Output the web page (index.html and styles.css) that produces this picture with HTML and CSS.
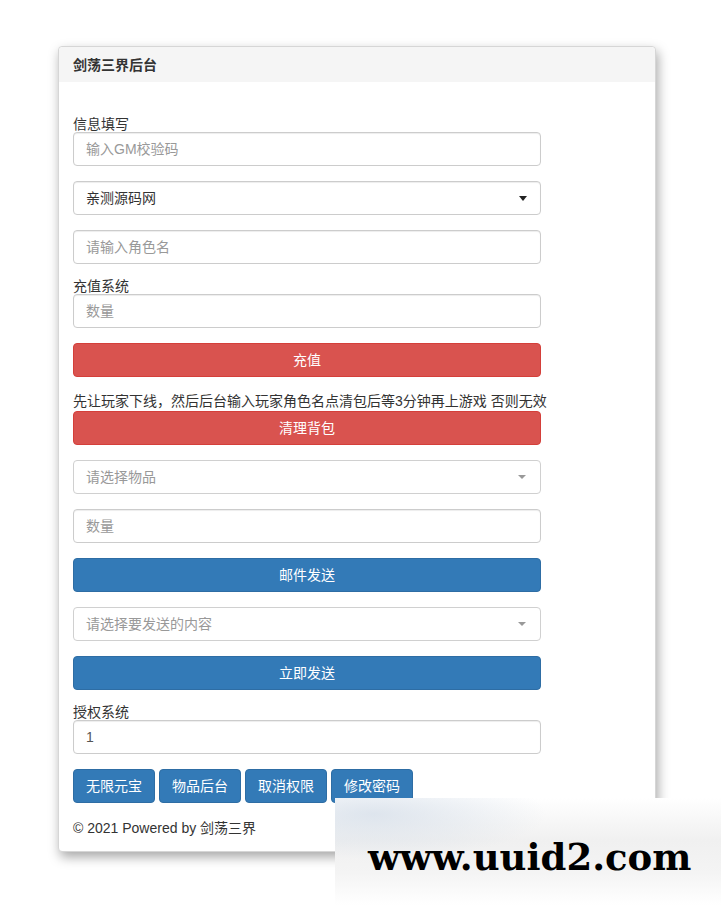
FILE: index.html
```html
<!DOCTYPE html>
<html lang="zh-CN">
<head>
    <meta charset="UTF-8">
    <meta name="viewport" content="width=device-width, initial-scale=1.0">
    <title>剑荡三界后台</title>
    <link rel="stylesheet" href="styles.css">
</head>
<body>
    <div class="panel">
        <div class="panel-heading">剑荡三界后台</div>

        <div class="panel-body">
            <form class="gm-form">
                <!-- 信息填写 -->
                <label class="field-label">信息填写</label>
                <div class="form-group">
                    <input type="text" class="form-control" placeholder="输入GM校验码">
                </div>
                <div class="form-group">
                    <div class="form-control select">
                        <span>亲测源码网</span>
                        <span class="caret"></span>
                    </div>
                </div>
                <div class="form-group">
                    <input type="text" class="form-control" placeholder="请输入角色名">
                </div>

                <!-- 充值系统 -->
                <label class="field-label">充值系统</label>
                <div class="form-group">
                    <input type="text" class="form-control" placeholder="数量">
                </div>
                <div class="form-group">
                    <div class="btn btn-danger btn-block">充值</div>
                </div>
                <p class="notice">先让玩家下线，然后后台输入玩家角色名点清包后等3分钟再上游戏 否则无效</p>
                <div class="form-group">
                    <div class="btn btn-danger btn-block">清理背包</div>
                </div>

                <!-- 邮件 -->
                <div class="form-group">
                    <div class="form-control select placeholder">
                        <span>请选择物品</span>
                        <span class="caret light"></span>
                    </div>
                </div>
                <div class="form-group">
                    <input type="text" class="form-control" placeholder="数量">
                </div>
                <div class="form-group">
                    <div class="btn btn-primary btn-block">邮件发送</div>
                </div>
                <div class="form-group">
                    <div class="form-control select placeholder">
                        <span>请选择要发送的内容</span>
                        <span class="caret light"></span>
                    </div>
                </div>
                <div class="form-group">
                    <div class="btn btn-primary btn-block">立即发送</div>
                </div>

                <!-- 授权系统 -->
                <label class="field-label">授权系统</label>
                <div class="form-group">
                    <input type="text" class="form-control" value="1">
                </div>
                <div class="btn-row">
                    <div class="btn btn-primary">无限元宝</div>
                    <div class="btn btn-primary">物品后台</div>
                    <div class="btn btn-primary">取消权限</div>
                    <div class="btn btn-primary">修改密码</div>
                </div>
            </form>

            <footer class="copyright">© 2021 Powered by 剑荡三界</footer>
        </div>
    </div>

    <div class="watermark">www.uuid2.com</div>
</body>
</html>
```

FILE: styles.css
```css
* {
    box-sizing: border-box;
}

body {
    margin: 0;
    padding: 0;
    background-color: #fff;
    color: #333;
    font-family: "Liberation Sans", Arial, "Noto Sans CJK SC", sans-serif;
    font-size: 14px;
}

.panel {
    width: 598px;
    margin: 46px 0 60px 58px;
    background: #fff;
    border: 1px solid #d6d6d6;
    border-radius: 4px;
    box-shadow: 2px 5px 12px rgba(0, 0, 0, 0.35);
}

.panel-heading {
    height: 35px;
    line-height: 36px;
    padding: 0 14px;
    background-color: #f5f5f5;
    font-size: 14px;
    font-weight: bold;
    color: #333;
    border-radius: 4px 4px 0 0;
}

.panel-body {
    padding: 35px 14px 13px;
}

.gm-form {
    width: 468px;
}

.field-label {
    display: block;
    line-height: 15px;
    font-size: 14px;
    color: #333;
}

.form-group {
    margin-bottom: 15px;
}

.form-control {
    display: block;
    width: 100%;
    height: 34px;
    padding: 6px 12px;
    font-family: inherit;
    font-size: 14px;
    line-height: 20px;
    color: #555;
    background: #fff;
    border: 1px solid #ccc;
    border-radius: 4px;
    box-shadow: inset 0 1px 1px rgba(0, 0, 0, 0.075);
}

.form-control::placeholder {
    color: #999;
}

.select {
    display: flex;
    align-items: center;
    justify-content: space-between;
    color: #333;
    padding-right: 13px;
}

.select.placeholder {
    color: #999;
    box-shadow: none;
    border-color: #d0d0d0;
}

.caret {
    width: 0;
    height: 0;
    border-top: 5px solid #222;
    border-left: 4px solid transparent;
    border-right: 4px solid transparent;
}

.caret.light {
    border-top: 4px solid #999;
    margin-right: 1px;
}

.btn {
    display: inline-block;
    height: 34px;
    padding: 6px 12px;
    line-height: 20px;
    font-size: 14px;
    text-align: center;
    color: #fff;
    border: 1px solid transparent;
    border-radius: 4px;
    cursor: pointer;
}

.btn-block {
    display: block;
    width: 100%;
}

.btn-danger {
    background-color: #d9534f;
    border-color: #d43f3a;
}

.btn-primary {
    background-color: #337ab7;
    border-color: #2e6da4;
}

.notice {
    margin: 0;
    line-height: 19px;
    font-size: 14px;
    white-space: nowrap;
    color: #333;
}

.btn-row {
    display: flex;
    gap: 4px;
}

.copyright {
    margin-top: 15px;
    line-height: 20px;
    font-size: 14px;
    color: #333;
}

.watermark {
    position: absolute;
    left: 335px;
    top: 798px;
    width: 386px;
    height: 107px;
    padding: 39px 0 0 33px;
    font-family: "DejaVu Serif", "Liberation Serif", serif;
    font-size: 37px;
    font-weight: bold;
    line-height: 40px;
    color: #000;
    background:
        radial-gradient(ellipse at 10% 15%, rgba(210, 220, 232, 0.7), rgba(255, 255, 255, 0) 35%),
        linear-gradient(to bottom, #fff 0%, #f0f0f0 40%, #f4f4f4 70%, #fff 100%);
}
```
